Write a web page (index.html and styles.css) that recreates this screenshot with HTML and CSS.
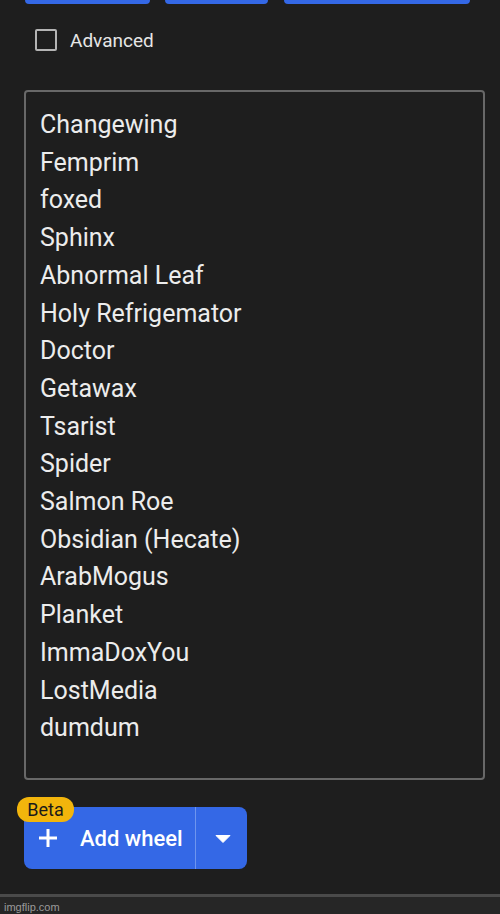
FILE: index.html
```html
<!DOCTYPE html>
<html>
<head>
<meta charset="utf-8">
<link rel="stylesheet" href="styles.css">
</head>
<body>
<div class="page">
  <div class="top-buttons">
    <div class="tb tb1"></div>
    <div class="tb tb2"></div>
    <div class="tb tb3"></div>
  </div>
  <label class="adv">
    <span class="checkbox"></span>
    <span class="adv-label">Advanced</span>
  </label>
  <div class="names">
    <div class="name">Changewing</div>
    <div class="name">Femprim</div>
    <div class="name">foxed</div>
    <div class="name">Sphinx</div>
    <div class="name">Abnormal Leaf</div>
    <div class="name">Holy Refrigemator</div>
    <div class="name">Doctor</div>
    <div class="name">Getawax</div>
    <div class="name">Tsarist</div>
    <div class="name">Spider</div>
    <div class="name">Salmon Roe</div>
    <div class="name">Obsidian (Hecate)</div>
    <div class="name">ArabMogus</div>
    <div class="name">Planket</div>
    <div class="name">ImmaDoxYou</div>
    <div class="name">LostMedia</div>
    <div class="name">dumdum</div>
  </div>
  <div class="add-wrap">
    <div class="add-btn">
      <div class="add-main">
        <svg class="plus" width="20" height="20" viewBox="0 0 20 20"><path d="M10 1v18M1 10h18" stroke="#fff" stroke-width="3" fill="none"/></svg>
        <span class="add-text">Add wheel</span>
      </div>
      <div class="add-drop">
        <svg width="16" height="8" viewBox="0 0 16 8"><path d="M1 0.5h14L8 7.5z" fill="#fff" stroke="#fff" stroke-width="1" stroke-linejoin="round"/></svg>
      </div>
    </div>
    <span class="beta">Beta</span>
  </div>
</div>
<div class="footer">
  <span class="brand">imgflip.com</span>
</div>
</body>
</html>
```
FILE: styles.css
```css
html, body {
  margin: 0;
  padding: 0;
  background: #1e1e1e;
  font-family: Roboto, "Liberation Sans", sans-serif;
}
.page {
  height: 894px;
  display: flex;
  flex-direction: column;
}
.top-buttons {
  display: flex;
  height: 4px;
  padding-left: 25px;
  gap: 15px;
}
.tb {
  background: #3468e6;
  border-radius: 0 0 6px 6px;
  height: 4px;
}
.tb1 { width: 125px; }
.tb2 { width: 103px; }
.tb3 { width: 186px; margin-left: 1px; }
.adv {
  display: flex;
  align-items: center;
  margin-top: 25px;
  padding-left: 35px;
  height: 22px;
}
.checkbox {
  width: 18px;
  height: 18px;
  border: 2px solid #b4b4b4;
  border-radius: 2px;
  box-sizing: content-box;
}
.adv-label {
  margin-left: 13px;
  color: #e6e6e6;
  font-size: 19px;
}
.names {
  margin: 39px 0 0 24px;
  width: 461px;
  height: 690px;
  border: 2px solid #686868;
  border-radius: 4px;
  padding: 14px 0 0 14px;
  box-sizing: border-box;
}
.name {
  color: #ececec;
  font-size: 25px;
  line-height: 37.7px;
}
.add-wrap {
  position: relative;
  margin: 27px 0 0 24px;
  width: 223px;
}
.add-btn {
  display: flex;
  height: 62px;
  background: #3468e6;
  border-radius: 8px;
  overflow: hidden;
}
.add-main {
  display: flex;
  align-items: center;
  width: 172px;
  padding-left: 14px;
  box-sizing: border-box;
  border-right: 1px solid #6e95ee;
}
.plus {
  display: block;
}
.add-text {
  margin-left: 22px;
  color: #fff;
  font-size: 22px;
  font-weight: 500;
}
.add-drop {
  flex: 1;
  display: flex;
  align-items: center;
  justify-content: center;
  padding-left: 2px;
}
.add-drop svg { display: block; margin-top: 2px; }
.beta {
  position: absolute;
  left: -7px;
  top: -10px;
  width: 57px;
  height: 25px;
  border-radius: 12px;
  background: #f2b50c;
  color: #1a1a1a;
  font-size: 18px;
  line-height: 25px;
  text-align: center;
}
.footer {
  height: 20px;
  border-top: 3px solid #4a4a4a;
  background: #262626;
  display: flex;
  align-items: center;
  padding-left: 4px;
}
.brand {
  color: #9a9a9a;
  font-family: "Liberation Sans", Arial, sans-serif;
  font-size: 11px;
}
```
